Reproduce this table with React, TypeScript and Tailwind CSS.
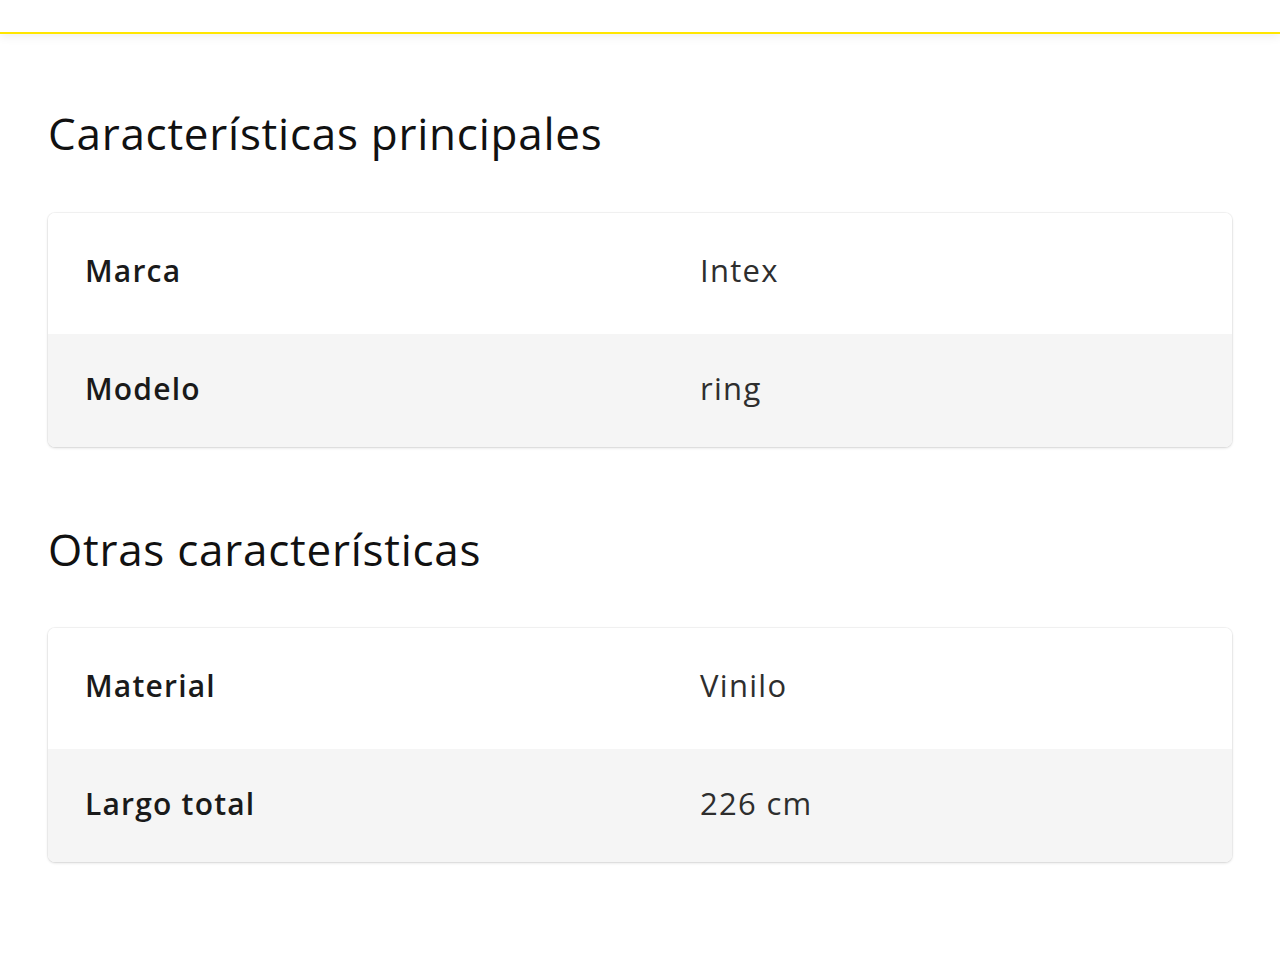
const main = [
  { label: "Marca", value: "Intex" },
  { label: "Modelo", value: "ring" },
];

const others = [
  { label: "Material", value: "Vinilo" },
  { label: "Largo total", value: "226 cm" },
];

const SpecTable = ({ rows }: { rows: { label: string; value: string }[] }) => (
  <div className="rounded-[7px] overflow-hidden bg-white shadow-[0_0_0_1px_rgba(0,0,0,0.04),0_1px_3px_rgba(0,0,0,0.14)]">
    {rows.map((row, index) => (
      <div
        key={row.label}
        className={`flex items-center ${
          index % 2 ? "h-[113px] pb-[4px] bg-[#f5f5f5]" : "h-[121px] pb-[7px] bg-white"
        }`}
      >
        <div className="w-[652px] pl-[37px] text-[30px] font-semibold tracking-[1.2px] text-[#1a1a1a]">
          {row.label}
        </div>
        <div className="text-[31px] text-[#2e2e2e] tracking-[1.3px]">{row.value}</div>
      </div>
    ))}
  </div>
);

export default function App() {
  return (
    <div
      className="w-[1280px] h-[960px] bg-white overflow-hidden"
      style={{ fontFamily: '"Open Sans", "Liberation Sans", sans-serif' }}
    >
      <div className="h-[34px] bg-white border-b-2 border-[#ffe600] shadow-[0_2px_10px_rgba(0,0,0,0.08)]" />
      <div className="px-[48px] pt-[73px]">
        <h2 className="text-[44px] leading-[52px] tracking-[0.75px] text-[#111111]">
          Características principales
        </h2>
        <div className="mt-[54px]">
          <SpecTable rows={main} />
        </div>
        <h2 className="mt-[76px] text-[44px] leading-[52px] tracking-[0.75px] text-[#111111]">
          Otras características
        </h2>
        <div className="mt-[53px]">
          <SpecTable rows={others} />
        </div>
      </div>
    </div>
  );
}
